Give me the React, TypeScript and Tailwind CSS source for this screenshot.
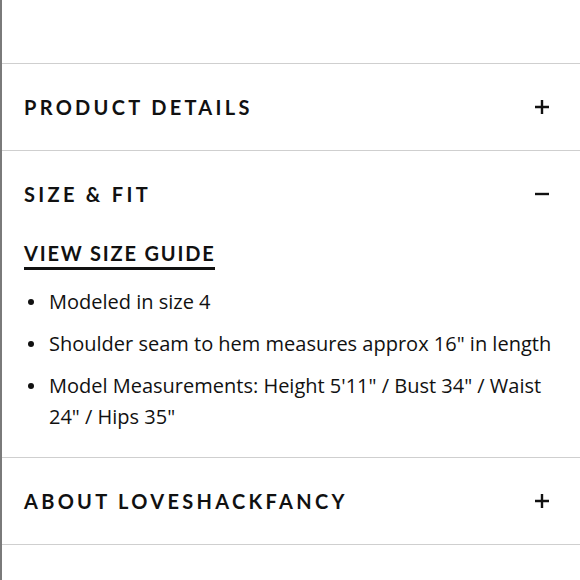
import React from "react";

const Plus = () => (
  <svg width="16" height="16" viewBox="0 0 16 16" className="block">
    <path d="M8 1v14M1 8h14" stroke="#111" strokeWidth="2.4" />
  </svg>
);
const Minus = () => (
  <svg width="16" height="16" viewBox="0 0 16 16" className="block">
    <path d="M1 8h14" stroke="#111" strokeWidth="2.4" />
  </svg>
);

const head = "font-['Lato',sans-serif] font-bold text-[20px] tracking-[3.3px] text-[#111] leading-none";

export default function App() {
  return (
    <div className="w-[580px] h-[580px] overflow-hidden bg-white border-l-2 border-[#7a7a7a]">
      <div className="h-[64px] border-b border-[#cfcfcf]" />
      <div className="h-[87px] flex items-center justify-between pl-[22px] pr-[30px] border-b border-[#cfcfcf]">
        <span className={head}>PRODUCT DETAILS</span>
        <Plus />
      </div>
      <div className="border-b border-[#cfcfcf] pl-[22px] pr-[20px]">
        <div className="h-[86px] flex items-center justify-between pr-[10px]">
          <span className={head}>SIZE &amp; FIT</span>
          <Minus />
        </div>
        <div className="mt-[4px]">
          <span className="inline-block font-['Lato',sans-serif] font-bold text-[20px] tracking-[1.8px] leading-[25px] text-[#111] border-b-[3px] border-[#111] pb-[1px]">
            VIEW SIZE GUIDE
          </span>
        </div>
        <ul className="mt-[16px] pb-[25px] flex flex-col gap-[11px] font-['Open_Sans',sans-serif] text-[20px] leading-[31px] text-[#111]">
          {[
            "Modeled in size 4",
            'Shoulder seam to hem measures approx 16" in length',
            'Model Measurements: Height 5\'11" / Bust 34" / Waist 24" / Hips 35"',
          ].map((t) => (
            <li key={t} className="flex">
              <span className="w-[25px] shrink-0 flex pt-[13px] pl-[4px]">
                <span className="block w-[6px] h-[6px] rounded-full bg-[#111]" />
              </span>
              <span>{t}</span>
            </li>
          ))}
        </ul>
      </div>
      <div className="h-[87px] flex items-center justify-between pl-[22px] pr-[30px] border-b border-[#cfcfcf]">
        <span className={head}>ABOUT LOVESHACKFANCY</span>
        <Plus />
      </div>
      <div className="h-[87px] flex items-center pl-[22px] pt-[70px]">
        <span className={head + " !text-[#e2e2e2]"}>FREE SHIPPING &amp; RETURNS</span>
      </div>
    </div>
  );
}
